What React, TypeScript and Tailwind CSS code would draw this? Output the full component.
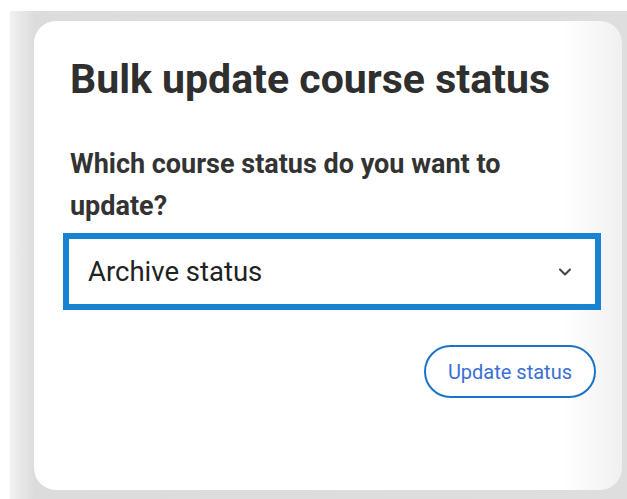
import { ChevronDown } from "lucide-react";

export default function App() {
  return (
    <div className="h-[499px] w-full overflow-hidden bg-white pl-[10px] pt-[11px] font-['Roboto',sans-serif]">
      {/* grey backdrop, shadow falls to the left */}
      <div className="h-full bg-gradient-to-r from-[#f1f1f1] via-[#dcdcdc] via-[4%] to-[#dedede] pl-[24px] pr-[5px] pt-[10px]">
        <div className="h-[469px] rounded-[22px] bg-gradient-to-r from-white via-white via-[90%] to-[#f0f0f0] pl-[36px] pr-[21px] pt-[34px]">
          <h1 className="text-[41px] leading-[48px] font-bold text-[#2f2f2f]">Bulk update course status</h1>

          <label className="mt-[40px] block max-w-[470px] text-[27px] leading-[42px] font-bold text-[#333]">
            Which course status do you want to update?
          </label>

          <div className="-ml-[7px] mt-[6px] flex h-[77px] items-center justify-between border-[6px] border-[#1783d1] bg-white pl-[19px] pr-[20px]">
            <span className="text-[27.5px] text-[#222]">Archive status</span>
            <ChevronDown className="h-[20px] w-[20px] text-[#444]" strokeWidth={2.5} />
          </div>

          <div className="mt-[35px] flex justify-end pr-[5px]">
            <button className="h-[53px] rounded-full border-2 border-[#1a73c9] bg-white px-[22px] text-[20px] text-[#3a6fd6]">
              Update status
            </button>
          </div>
        </div>
      </div>
    </div>
  );
}
